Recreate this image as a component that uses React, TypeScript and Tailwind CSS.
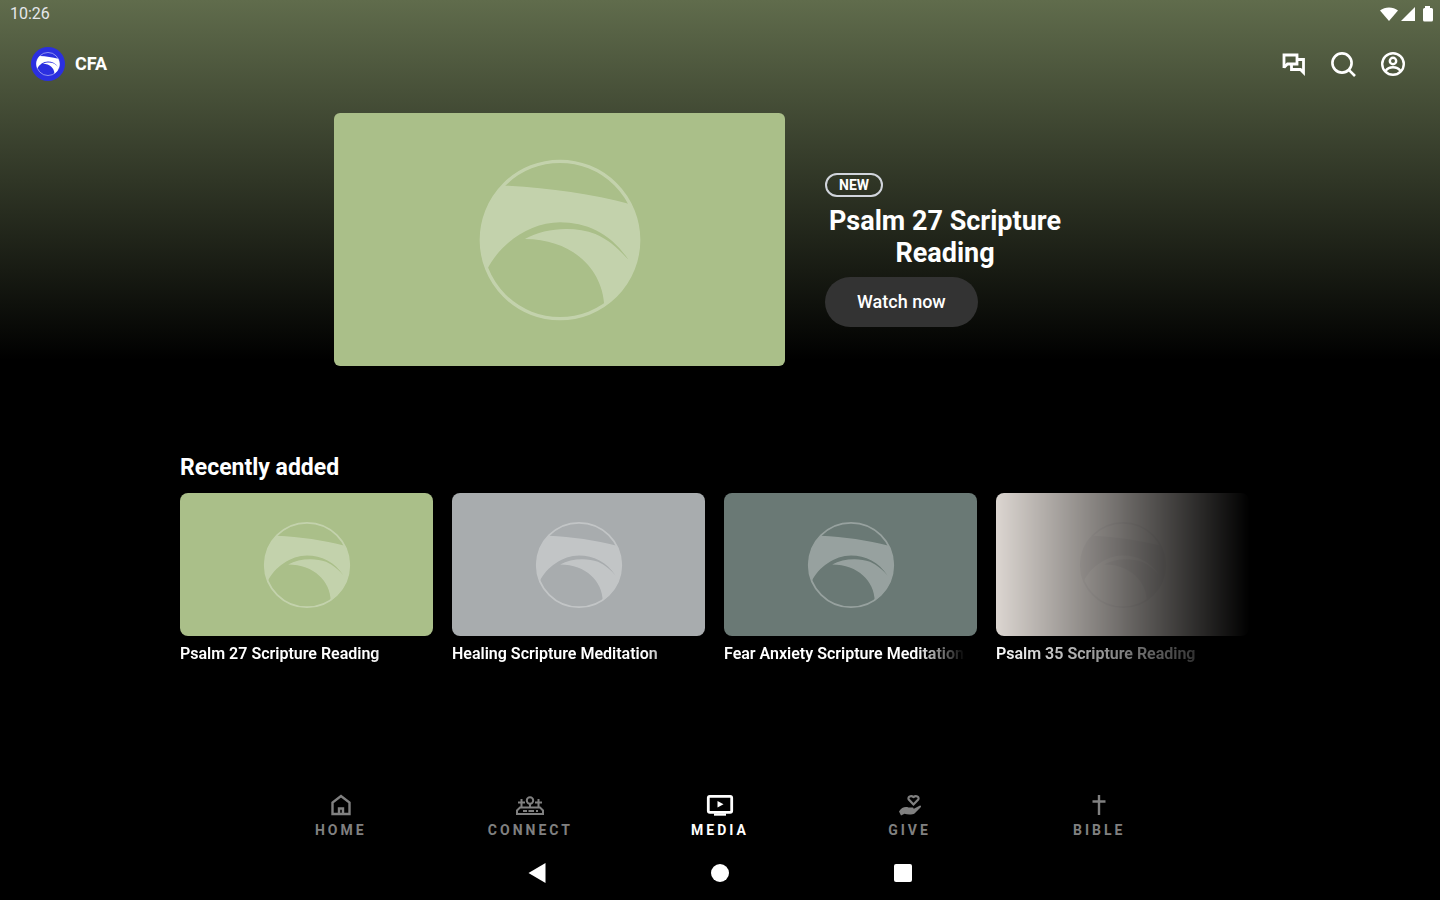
import type { ReactNode } from 'react'

interface MediaItem {
  title: string
  cover: string
  faded?: boolean
}

const recent: MediaItem[] = [
  { title: 'Psalm 27 Scripture Reading', cover: 'bg-[#aabf89]' },
  { title: 'Healing Scripture Meditation', cover: 'bg-[#a8acae]' },
  { title: 'Fear Anxiety Scripture Meditation', cover: 'bg-[#6a7975]' },
  { title: 'Psalm 35 Scripture Reading', cover: 'bg-[#dcd6d1]', faded: true },
]

function Emblem({ className }: { className: string }) {
  return (
    <svg viewBox="50 50 496 496" className={className} fill="currentColor" aria-hidden="true">
      <circle cx="298" cy="298" r="238" fill="none" stroke="currentColor" strokeWidth="10" />
      <path
        d="M126 133C260 140 390 157 511 190A240 240 0 0 1 432 498C428 390 340 296 192 295
          C250 262 340 255 405 280C450 300 480 330 505 358C455 280 380 244 298 244
          C205 244 115 310 76 390A240 240 0 0 1 126 133Z"
      />
    </svg>
  )
}

function ChatIcon() {
  return (
    <svg viewBox="0 0 28 28" className="size-7" fill="none" stroke="currentColor" strokeWidth="2.8" aria-hidden="true">
      <path d="M5 18V5H18V14H8.5L5 17.5" />
      <path d="M18 9.5H24.5V22.5L21.5 19.5H12.5V14.5" />
    </svg>
  )
}

function SearchIcon() {
  return (
    <svg viewBox="0 0 28 28" className="size-7" fill="none" stroke="currentColor" strokeWidth="2.6" aria-hidden="true">
      <circle cx="13" cy="13" r="9.6" />
      <path d="M19.8 19.8L26 26" />
    </svg>
  )
}

function AccountIcon() {
  return (
    <svg viewBox="0 0 28 28" className="size-7" fill="none" stroke="currentColor" strokeWidth="2.4" aria-hidden="true">
      <circle cx="14" cy="14" r="10.8" />
      <circle cx="14" cy="11" r="3.2" />
      <path d="M6.5 21C8.5 18.3 11 17.3 14 17.3S19.5 18.3 21.5 21" />
    </svg>
  )
}

function HomeIcon() {
  return (
    <svg viewBox="0 0 28 24" className="h-6 w-7" fill="none" stroke="currentColor" strokeWidth="2.4" aria-hidden="true">
      <path d="M5.5 21V9.5L14 3L22.5 9.5V21Z" />
      <path d="M12 21V15.5H16V21" />
    </svg>
  )
}

function ConnectIcon() {
  return (
    <svg viewBox="0 0 32 24" className="h-6 w-8" fill="none" stroke="currentColor" strokeWidth="2" aria-hidden="true">
      <circle cx="16" cy="7.5" r="3.2" />
      <path d="M16 10.5V14M7.5 6V14M24.5 6V14M4 9.5H11M21 9.5H28" />
      <path d="M6 14.5H26L29 17.5V21H3V17.5Z" />
      <path d="M9 18H13M14.5 18H20M22 18H24" />
    </svg>
  )
}

function MediaIcon() {
  return (
    <svg viewBox="0 0 28 24" className="h-6 w-7" fill="none" stroke="currentColor" strokeWidth="2.8" aria-hidden="true">
      <rect x="2.3" y="3.3" width="23.4" height="16" rx="1.5" />
      <path d="M8 21.5H20" strokeWidth="2.4" />
      <path d="M11.5 8V14.6L17.5 11.3Z" fill="currentColor" stroke="none" />
    </svg>
  )
}

function GiveIcon() {
  return (
    <svg viewBox="0 0 28 24" className="h-6 w-7" fill="none" stroke="currentColor" strokeWidth="2.2" aria-hidden="true">
      <path d="M17.5 11.5L12.8 6.5C11.3 4.5 14.5 1.8 17.5 4C20.5 1.8 23.7 4.5 22.2 6.5Z" />
      <path
        d="M3 18.5C5.500 14.5 9 13.3 12.5 14.5H16.5C18 14.5 18 16.5 16.5 16.5L24 12.5C25 12.3 25.5 13.5 24.5 14.5L18.5 20.5C17 21.5 12 22 8.5 20.7L5 22.5Z"
        fill="currentColor"
        stroke="none"
      />
    </svg>
  )
}

function BibleIcon() {
  return (
    <svg viewBox="0 0 28 24" className="h-6 w-7" fill="none" stroke="currentColor" strokeWidth="2.4" aria-hidden="true">
      <path d="M14 2V22M7.5 8.5H20.5" />
    </svg>
  )
}

const tabs: { label: string; icon: ReactNode; active?: boolean }[] = [
  { label: 'HOME', icon: <HomeIcon /> },
  { label: 'CONNECT', icon: <ConnectIcon /> },
  { label: 'MEDIA', icon: <MediaIcon />, active: true },
  { label: 'GIVE', icon: <GiveIcon /> },
  { label: 'BIBLE', icon: <BibleIcon /> },
]

function StatusBar() {
  return (
    <div className="flex h-7 items-center justify-between pl-2.5 pr-1.5 text-base text-gray-200">
      <span>10:26</span>
      <div className="flex items-center gap-0.5 text-white">
        <svg viewBox="0 0 18 16" className="h-4 w-[18px]" fill="currentColor" aria-hidden="true">
          <path d="M0 4.5C5 0.5 13 0.5 18 4.5L9 15Z" />
        </svg>
        <svg viewBox="0 0 16 16" className="size-4" fill="currentColor" aria-hidden="true">
          <path d="M15 1V15H1Z" />
        </svg>
        <svg viewBox="0 0 16 16" className="size-4" fill="currentColor" aria-hidden="true">
          <path d="M7 0H12V2H13.5Q15 2 15 3.5V14Q15 15.5 13.5 15.5H6.5Q5 15.5 5 14V3.5Q5 2 6.5 2H7Z" />
        </svg>
      </div>
    </div>
  )
}

function Header() {
  return (
    <header className="flex h-[72px] items-center justify-between pr-[33px] pl-[31px]">
      <a href="#" className="flex items-center gap-2.5">
        <span className="flex size-[34px] items-center justify-center rounded-full bg-[#2b2fe0] text-white">
          <Emblem className="size-6" />
        </span>
        <span className="text-lg font-bold">CFA</span>
      </a>
      <div className="flex items-center gap-[22px]">
        <button type="button" aria-label="Messages"><ChatIcon /></button>
        <button type="button" aria-label="Search"><SearchIcon /></button>
        <button type="button" aria-label="Account"><AccountIcon /></button>
      </div>
    </header>
  )
}

function Hero() {
  return (
    <section className="mt-[13px] flex items-center justify-center gap-10 px-8">
      <div className="flex aspect-[451/253] w-full max-w-[451px] items-center justify-center rounded-md bg-[#aabf89]">
        <Emblem className="w-4/11 text-white opacity-30" />
      </div>
      <div className="flex w-[281px] flex-col items-start pt-5">
        <span className="rounded-full border-2 border-gray-300 px-3 text-sm leading-5 font-bold">NEW</span>
        <h1 className="mt-2 max-w-60 text-center text-[27px] leading-8 font-bold">Psalm 27 Scripture Reading</h1>
        <button type="button" className="mt-2 h-[50px] rounded-full bg-[#333333] px-8 text-lg font-medium">
          Watch now
        </button>
      </div>
    </section>
  )
}

function MediaCard({ item }: { item: MediaItem }) {
  return (
    <li className={`w-[253px] shrink-0 ${item.faded ? 'mask-r-from-0% mask-r-to-100%' : ''}`}>
      <a href="#" className="block">
        <div className={`flex aspect-[253/143] items-center justify-center rounded-lg ${item.cover}`}>
          <Emblem className={`w-[88px] ${item.faded ? 'text-[#a9a4a8] opacity-15' : 'text-white opacity-30'}`} />
        </div>
        <p className="mt-2 mr-3 overflow-hidden mask-r-from-80% mask-r-to-100% text-base leading-5 font-semibold whitespace-nowrap">
          {item.title}
        </p>
      </a>
    </li>
  )
}

function TabBar() {
  return (
    <nav className="mx-auto flex w-full max-w-[948px]">
      {tabs.map((tab) => (
        <a
          key={tab.label}
          href="#"
          className={`flex flex-1 flex-col items-center gap-[3px] ${tab.active ? 'text-white' : 'text-[#808080]'}`}
        >
          {tab.icon}
          <span className="text-sm leading-5 font-bold tracking-[3px]">{tab.label}</span>
        </a>
      ))}
    </nav>
  )
}

function SystemBar() {
  return (
    <div className="mx-auto flex h-12 w-full max-w-[548px] items-center">
      <button type="button" aria-label="Back" className="flex flex-1 justify-center">
        <svg viewBox="0 0 20 20" className="size-5" fill="currentColor" aria-hidden="true">
          <path d="M1.5 10L18.5 0V20Z" />
        </svg>
      </button>
      <button type="button" aria-label="Home screen" className="flex flex-1 justify-center">
        <span className="size-[18px] rounded-full bg-white" />
      </button>
      <button type="button" aria-label="Overview" className="flex flex-1 justify-center">
        <span className="size-[18px] rounded-xs bg-white" />
      </button>
    </div>
  )
}

export default function App() {
  return (
    <div className="flex min-h-screen flex-col bg-black bg-linear-to-b/srgb from-[#606c4c] to-black to-[360px] font-['Roboto',sans-serif] text-white">
      <StatusBar />
      <Header />
      <main>
        <Hero />
        <section className="mx-auto mt-[86px] w-full max-w-[1080px]">
          <h2 className="text-[23px] leading-8 font-bold">Recently added</h2>
          <ul className="mt-[9px] flex gap-[19px] overflow-hidden">
            {recent.map((item) => (
              <MediaCard key={item.title} item={item} />
            ))}
          </ul>
        </section>
      </main>
      <footer className="mt-auto pb-[3px]">
        <TabBar />
        <div className="mt-[9px]">
          <SystemBar />
        </div>
      </footer>
    </div>
  )
}
